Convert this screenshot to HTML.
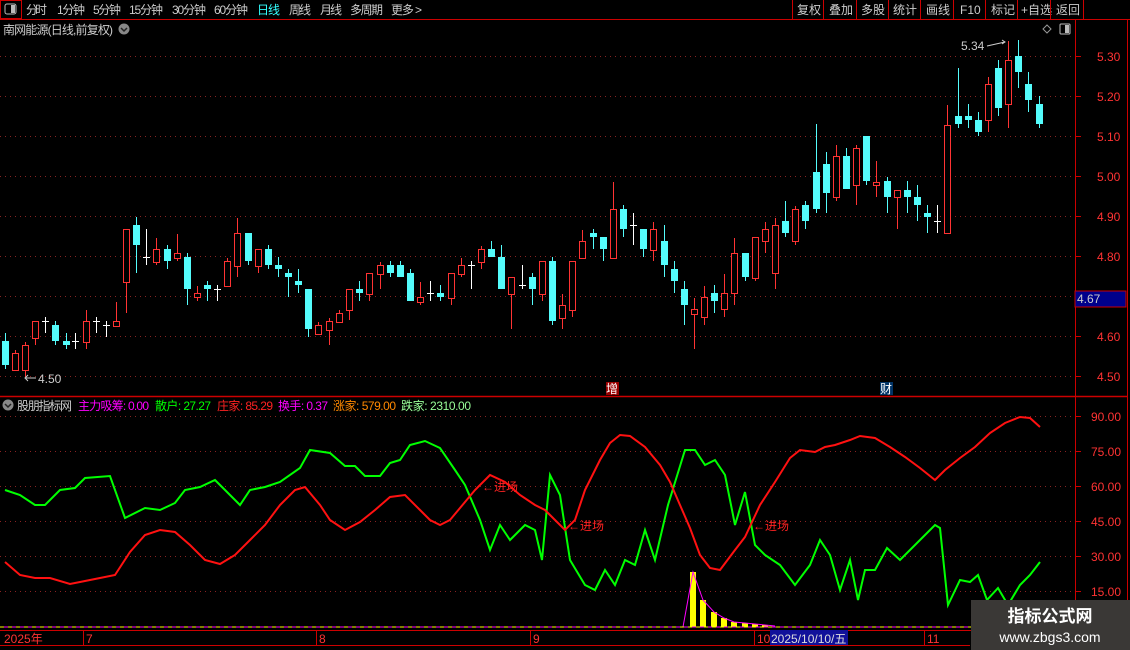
<!DOCTYPE html>
<html><head><meta charset="utf-8"><style>
body{margin:0;background:#000;width:1130px;height:650px;overflow:hidden;font-family:"Liberation Sans","Noto Sans CJK SC",sans-serif}
svg{position:absolute;left:0;top:0}
text{font-family:"Liberation Sans","Noto Sans CJK SC",sans-serif}
</style></head><body>
<svg id="s" width="1130" height="650" xmlns="http://www.w3.org/2000/svg">
<rect width="1130" height="650" fill="#000"/>
<line x1="0" y1="19.5" x2="1130" y2="19.5" stroke="#c00" />
<rect x="0.5" y="0.5" width="21" height="18" fill="none" stroke="#c00"/>
<rect x="5" y="4" width="11" height="10" rx="2" fill="none" stroke="#bbb"/><rect x="11" y="5" width="4" height="8" fill="#bbb"/>
<g font-size="12" fill="#ccc">
<text x="26" y="14" textLength="21">分时</text><text x="57" y="14" textLength="28">1分钟</text><text x="93" y="14" textLength="28">5分钟</text><text x="129" y="14" textLength="34">15分钟</text><text x="172" y="14" textLength="34">30分钟</text><text x="214" y="14" textLength="34">60分钟</text>
<text x="257" y="14" fill="#3ff" textLength="23">日线</text><text x="289" y="14" textLength="22">周线</text><text x="320" y="14" textLength="22">月线</text><text x="350" y="14" textLength="33">多周期</text><text x="391" y="14" textLength="31">更多 &gt;</text>
<text x="797" y="14">复权</text><text x="829" y="14">叠加</text><text x="861" y="14">多股</text><text x="893" y="14">统计</text><text x="926" y="14">画线</text><text x="960" y="14">F10</text><text x="991" y="14">标记</text><text x="1021" y="14">+自选</text><text x="1056" y="14">返回</text>
</g>
<g stroke="#c00"><line x1="792.5" y1="0" x2="792.5" y2="19"/><line x1="823.5" y1="0" x2="823.5" y2="19"/><line x1="856.5" y1="0" x2="856.5" y2="19"/><line x1="888.5" y1="0" x2="888.5" y2="19"/><line x1="920.5" y1="0" x2="920.5" y2="19"/><line x1="953.5" y1="0" x2="953.5" y2="19"/><line x1="985.5" y1="0" x2="985.5" y2="19"/><line x1="1017.5" y1="0" x2="1017.5" y2="19"/><line x1="1050.5" y1="0" x2="1050.5" y2="19"/><line x1="1083.5" y1="0" x2="1083.5" y2="19"/></g>
<text x="3" y="34" font-size="12" fill="#ccc" textLength="110">南网能源(日线,前复权)</text>
<circle cx="124" cy="29" r="5.5" fill="#888"/><path d="M121 28l3 3 3-3" stroke="#222" fill="none" stroke-width="1.5"/>
<path d="M1047 25l4 4-4 4-4-4z" fill="none" stroke="#999"/>
<rect x="1060" y="24" width="10" height="10" rx="1" fill="none" stroke="#bbb"/><rect x="1065" y="25" width="4" height="8" fill="#bbb"/>
<line x1="1075.5" y1="19" x2="1075.5" y2="630" stroke="#c00"/>
<line x1="1127.5" y1="19" x2="1127.5" y2="650" stroke="#c00"/>
<line x1="0" y1="396.5" x2="1127" y2="396.5" stroke="#c00" stroke-width="1.5"/>
<g id="grid" stroke="#822" stroke-dasharray="1,4"></g>
<g font-size="12" fill="#f33" id="ax">
<text x="1097" y="61">5.30</text><text x="1097" y="101">5.20</text><text x="1097" y="141">5.10</text><text x="1097" y="181">5.00</text><text x="1097" y="221">4.90</text><text x="1097" y="261">4.80</text><text x="1097" y="341">4.60</text><text x="1097" y="381">4.50</text>
<text x="1091" y="421">90.00</text><text x="1091" y="456">75.00</text><text x="1091" y="491">60.00</text><text x="1091" y="526">45.00</text><text x="1091" y="561">30.00</text><text x="1091" y="596">15.00</text>
</g>
<rect x="1075" y="291" width="51" height="16" fill="#00008b" stroke="#c00"/>
<text x="1077" y="303" font-size="12" fill="#ccc">4.67</text>
<g id="c"></g>
<text x="961" y="50" font-size="12" fill="#ccc">5.34</text><path d="M987 46l18-4m-3-2l3 2-3 2" stroke="#ccc" fill="none"/>
<path d="M26 378h10m-8-3l-3 3 3 3" stroke="#ccc" fill="none"/><text x="38" y="383" font-size="12" fill="#ccc">4.50</text>
<rect x="606" y="382" width="13" height="13" fill="#900"/><text x="606" y="393" font-size="12" fill="#fff">增</text>
<rect x="880" y="382" width="13" height="13" fill="#036"/><text x="880" y="393" font-size="12" fill="#fff">财</text>
<circle cx="8" cy="405" r="5.5" fill="#888"/><path d="M5 404l3 3 3-3" stroke="#222" fill="none" stroke-width="1.5"/>
<g font-size="12">
<text x="17" y="410" fill="#ccc" textLength="55">股朋指标网</text>
<text x="78" y="410" fill="#f0f" textLength="71">主力吸筹: 0.00</text>
<text x="155" y="410" fill="#0f0" textLength="56">散户: 27.27</text>
<text x="217" y="410" fill="#f22" textLength="56">庄家: 85.29</text>
<text x="278" y="410" fill="#f0f" textLength="50">换手: 0.37</text>
<text x="333" y="410" fill="#f80" textLength="63">涨家: 579.00</text>
<text x="401" y="410" fill="#9f9" textLength="70">跌家: 2310.00</text>
</g>
<g id="bars" fill="#ff0"></g>
<polyline id="mg" fill="none" stroke="#f0f" stroke-width="1"/>
<line x1="0" y1="627" x2="1075" y2="627" stroke="#f0f"/><line x1="0" y1="627" x2="1075" y2="627" stroke="#ff0" stroke-dasharray="4,4"/>
<polyline id="gl" fill="none" stroke="#0f0" stroke-width="2"/>
<polyline id="rl" fill="none" stroke="#f11" stroke-width="2"/>
<g font-size="12" fill="#f22"><text x="482" y="491">←进场</text><text x="568" y="530">←进场</text><text x="753" y="530">←进场</text></g>
<line x1="0" y1="630.5" x2="1130" y2="630.5" stroke="#c00"/>
<line x1="0" y1="645.5" x2="970" y2="645.5" stroke="#c00"/>
<g stroke="#c00"><line x1="83.5" y1="630" x2="83.5" y2="645"/><line x1="316.5" y1="630" x2="316.5" y2="645"/><line x1="530.5" y1="630" x2="530.5" y2="645"/><line x1="754.5" y1="630" x2="754.5" y2="645"/><line x1="924.5" y1="630" x2="924.5" y2="645"/></g>
<g font-size="12" fill="#f33"><text x="4" y="643">2025年</text><text x="86" y="643">7</text><text x="319" y="643">8</text><text x="533" y="643">9</text><text x="757" y="643">10</text><text x="927" y="643">11</text></g>
<rect x="770" y="630" width="78" height="15" fill="#11119a"/><text x="771" y="643" font-size="12" fill="#ddd">2025/10/10/五</text>
<rect x="971" y="600" width="159" height="50" fill="#3a3836"/>
<text x="1050" y="622" font-size="17" font-weight="bold" fill="#fff" text-anchor="middle">指标公式网</text>
<text x="1050" y="642" font-size="14" fill="#fff" text-anchor="middle">www.zbgs3.com</text>
</svg>
<script>
var N="http://www.w3.org/2000/svg";function E(p,t,a){var e=document.createElementNS(N,t);for(var k in a)e.setAttribute(k,a[k]);document.getElementById(p).appendChild(e);return e;}
[56,96,136,176,216,256,296,336,376].forEach(function(y){E('grid','line',{x1:0,y1:y+.5,x2:1075,y2:y+.5});E('ax','line',{x1:1075,y1:y+.5,x2:1081,y2:y+.5,stroke:'#c00'});});
[416,451,486,521,556,591].forEach(function(y){E('grid','line',{x1:0,y1:y+.5,x2:1075,y2:y+.5});E('ax','line',{x1:1075,y1:y+.5,x2:1081,y2:y+.5,stroke:'#c00'});});
var C=[[4.5,341,365,333,369,'c'],[14.5,353,370,350,370,'r'],[25,345,370,342,377,'r'],[35,321,338,321,345,'r'],[45,321,321,317,333,'w'],[55,325,341,321,345,'c'],[65.5,341,345,333,349,'c'],[75,341,341,333,349,'w'],[85.5,321,342,310,349,'r'],[96,321,321,317,333,'w'],[106,325,325,321,337,'w'],[116,321,326,302,326,'r'],[126,229,282,229,313,'r'],[136,225,245,217,273,'c'],[146,257,257,229,265,'w'],[156,249,262,238,265,'r'],[167,249,261,245,269,'c'],[177,253,258,234,261,'r'],[187,257,289,253,305,'c'],[197,293,297,286,301,'r'],[207,285,289,281,301,'c'],[217,289,289,285,301,'w'],[227,261,286,258,286,'r'],[237,233,266,218,277,'r'],[248,233,261,233,265,'c'],[258,249,266,249,273,'r'],[268,249,265,245,269,'c'],[278,265,269,257,277,'c'],[288,273,277,269,297,'c'],[298,281,285,269,293,'c'],[308,289,329,289,337,'c'],[318,325,334,322,334,'r'],[329,321,330,318,345,'r'],[339,313,322,310,322,'r'],[349,289,310,289,320,'r'],
[359,289,293,281,301,'c'],[369,273,294,273,301,'r'],[380,265,274,262,289,'r'],[390,265,273,261,277,'c'],[400,265,277,261,277,'c'],[410,273,301,269,301,'c'],[420,297,302,282,305,'r'],[430,293,293,281,301,'w'],[440,293,297,285,301,'c'],[451,273,298,273,305,'r'],[461,265,274,258,277,'r'],[471,265,265,261,289,'w'],[481,249,262,246,269,'r'],[491,249,257,241,257,'c'],[501,257,289,245,289,'c'],[511,277,294,277,329,'r'],[522,285,285,265,289,'w'],[532,277,289,273,305,'c'],[542,261,294,261,301,'r'],[552,261,321,257,325,'c'],[562,305,318,294,329,'r'],[572,261,310,261,317,'r'],[582,241,258,230,258,'r'],[593,233,237,229,249,'c'],[603,237,249,237,261,'c'],[613,209,258,182,258,'r'],[623,209,229,205,237,'c'],[633,225,225,213,245,'w'],[643,229,249,229,257,'c'],[653,229,250,222,261,'r'],[664,241,265,225,277,'c'],[674,269,281,261,293,'c'],[684,289,305,281,325,'c'],[694,309,314,298,349,'r'],
[704,297,317,286,325,'r'],[714,293,301,285,313,'c'],[724,293,309,274,317,'r'],[734,253,293,238,305,'r'],[745,253,277,253,281,'c'],[755,237,278,237,281,'r'],[765,229,241,222,253,'r'],[775,225,273,218,289,'r'],[785,221,233,201,237,'c'],[795,209,241,206,245,'r'],[805,205,221,201,229,'c'],[816,172,209,124,213,'c'],[826,164,193,152,213,'c'],[836,156,197,145,201,'r'],[846,156,189,148,189,'c'],[856,148,185,145,205,'r'],[866,136,181,136,185,'c'],[876,182,185,161,197,'r'],[887,181,197,177,213,'c'],[897,190,197,190,229,'r'],[907,190,197,181,213,'c'],[917,197,205,185,221,'c'],[927,213,217,205,233,'c'],[937,221,221,205,233,'w'],[947,125,233,105,233,'r'],[958,116,124,68,128,'c'],[968,116,120,104,128,'c'],[978,120,132,112,136,'c'],[988,84,120,77,132,'r'],[998,68,108,60,116,'c'],[1008,60,104,41,128,'r'],[1018,56,72,40,88,'c'],[1028,84,100,72,112,'c'],[1039,104,124,96,128,'c']];
C.forEach(function(d){var x=Math.round(d[0]),col=d[5]=='r'?'#ff3333':d[5]=='c'?'#54fcfc':'#fff';
E('c','line',{x1:x+.5,y1:d[3],x2:x+.5,y2:d[4],stroke:col});
if(d[5]=='w'){E('c','line',{x1:x-3,y1:d[1]+.5,x2:x+4,y2:d[1]+.5,stroke:col});}
else if(d[5]=='r'){E('c','rect',{x:x-3+.5,y:d[1]+.5,width:6,height:Math.max(1,d[2]-d[1]),fill:'#000',stroke:col});}
else{E('c','rect',{x:x-3,y:d[1],width:7,height:Math.max(2,d[2]-d[1]),fill:col});}});
var B=[[693,572],[703,600],[714,612],[724,618],[734,622],[745,623],[755,624],[765,625]];
var mp=[[683,627]];B.forEach(function(b){E('bars','rect',{x:b[0]-3,y:b[1],width:6,height:627-b[1]});mp.push([b[0],b[1]]);});mp.push([775,626]);
document.getElementById('mg').setAttribute('points',mp.join(' '));
document.getElementById('gl').setAttribute('points',"5,490 20,495 35,505 45,505 60,490 75,488 85,478 110,476 125,518 145,508 160,510 175,503 185,490 200,487 215,480 230,495 240,505 250,490 265,487 280,482 300,468 310,450 330,453 345,466 355,466 365,476 380,476 390,463 400,460 410,445 425,441 440,448 455,470 465,485 480,520 490,550 500,525 510,540 525,525 535,530 542,560 550,475 560,495 570,560 585,585 595,590 605,570 615,585 625,560 635,565 645,530 655,560 668,505 685,450 695,450 705,465 715,460 725,475 735,525 745,492 755,545 765,555 780,565 795,585 810,565 820,540 830,555 840,590 850,560 858,600 865,570 875,570 887,548 900,560 915,545 925,535 935,525 940,528 948,605 960,580 970,582 978,575 987,600 998,588 1008,605 1020,585 1030,575 1040,562");
document.getElementById('rl').setAttribute('points',"5,562 20,575 35,578 50,578 70,584 80,582 100,578 115,575 130,552 145,535 160,530 175,532 190,545 205,560 220,564 235,555 250,540 265,525 280,505 295,490 305,487 320,505 330,520 345,530 360,522 375,510 390,497 405,495 420,510 430,520 440,525 450,520 460,508 475,490 490,475 505,482 520,495 535,505 545,510 555,520 565,530 575,520 585,490 600,460 610,443 620,435 630,436 645,447 660,465 670,482 680,505 690,528 700,555 710,568 720,570 735,550 745,537 760,505 775,482 790,458 800,450 815,452 825,447 835,445 850,440 860,436 875,438 890,447 905,457 920,468 935,480 945,470 960,458 975,447 990,433 1005,423 1020,417 1030,418 1040,427");
</script>
</body></html>
